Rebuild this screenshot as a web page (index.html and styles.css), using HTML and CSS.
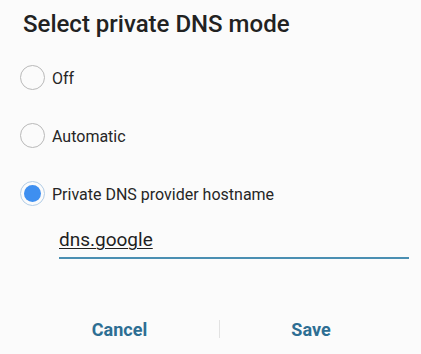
FILE: index.html
```html
<!DOCTYPE html>
<html>
<head>
<meta charset="utf-8">
<link rel="stylesheet" href="styles.css">
</head>
<body>
<div class="dialog">
  <h1 class="title">Select private DNS mode</h1>
  <div class="options">
    <div class="option">
      <span class="radio"></span>
      <span class="label">Off</span>
    </div>
    <div class="option">
      <span class="radio"></span>
      <span class="label">Automatic</span>
    </div>
    <div class="option">
      <span class="radio checked"><span class="dot"></span></span>
      <span class="label">Private DNS provider hostname</span>
    </div>
  </div>
  <div class="field">
    <span class="value">dns.google</span>
  </div>
  <div class="actions">
    <button class="btn btn-left">Cancel</button>
    <span class="divider"></span>
    <button class="btn btn-right">Save</button>
  </div>
</div>
</body>
</html>
```
FILE: styles.css
```css
html, body {
  margin: 0;
  padding: 0;
  background: #fbfbfb;
}
body {
  width: 421px;
  height: 354px;
  overflow: hidden;
  font-family: Roboto, "Noto Sans", sans-serif;
}
.dialog {
  padding: 8px 12px 0 20px;
}
.title {
  margin: 0 0 0 3px;
  font-size: 24px;
  line-height: 32px;
  font-weight: 500;
  color: #222;
}
.options {
  margin-top: 8px;
  display: flex;
  flex-direction: column;
}
.option {
  height: 58px;
  display: flex;
  align-items: center;
}
.radio {
  width: 23px;
  height: 23px;
  border: 1px solid #b9b9b9;
  border-radius: 50%;
  box-sizing: content-box;
  display: flex;
  align-items: center;
  justify-content: center;
  flex: none;
}
.radio.checked {
  border-color: #b3cde6;
}
.dot {
  width: 17px;
  height: 17px;
  border-radius: 50%;
  background: #3e8ff0;
}
.label {
  margin-left: 7px;
  padding-top: 2px;
  font-size: 16px;
  color: #262626;
}
.field {
  margin: 6px 0 0 39px;
  height: 29px;
  border-bottom: 2px solid #4a8fb2;
  display: flex;
  align-items: flex-end;
}
.value {
  font-size: 19px;
  line-height: 22px;
  margin-bottom: 6px;
  color: #1f1f1f;
  text-decoration: underline;
  text-decoration-thickness: 1px;
  text-underline-offset: 2px;
}
.actions {
  margin-top: 55px;
  display: flex;
  align-items: center;
  height: 30px;
}
.btn {
  border: none;
  background: none;
  padding: 0;
  font-family: Roboto, "Noto Sans", sans-serif;
  font-size: 18px;
  font-weight: 700;
  color: #2d6e93;
  height: 30px;
}
.btn-left {
  width: 199px;
}
.btn-right {
  width: 182px;
}
.divider {
  width: 1px;
  height: 18px;
  background: #e2e2e2;
  flex: none;
}
```
